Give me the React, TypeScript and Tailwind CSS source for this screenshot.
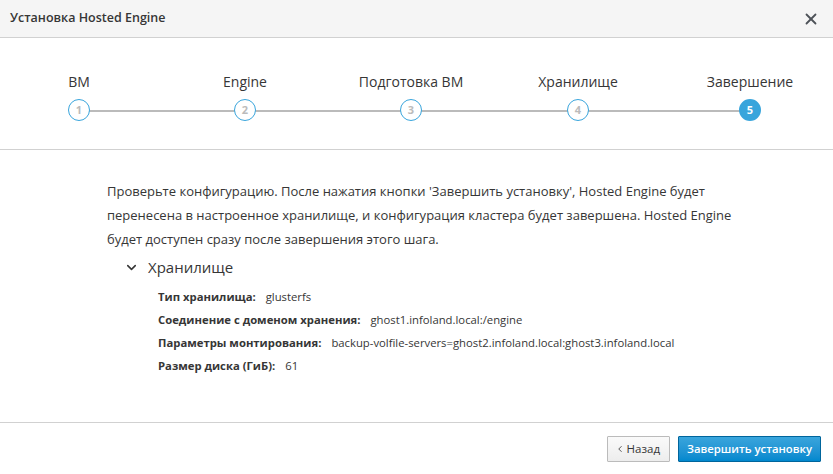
import { X, ChevronDown, ChevronLeft } from "lucide-react";

const steps = [
  { n: 1, label: "ВМ" },
  { n: 2, label: "Engine" },
  { n: 3, label: "Подготовка ВМ" },
  { n: 4, label: "Хранилище" },
  { n: 5, label: "Завершение", active: true },
];

const details = [
  ["Тип хранилища:", "glusterfs"],
  ["Соединение с доменом хранения:", "ghost1.infoland.local:/engine"],
  ["Параметры монтирования:", "backup-volfile-servers=ghost2.infoland.local:ghost3.infoland.local"],
  ["Размер диска (ГиБ):", "61"],
];

function Step({ n, label, active }: { n: number; label: string; active?: boolean }) {
  return (
    <div className="relative z-10 flex w-[22px] flex-col items-center">
      <div className="whitespace-nowrap text-[14px] leading-5 text-[#363636]">{label}</div>
      <div
        className={
          active
            ? "mt-[7px] grid h-[22px] w-[22px] place-items-center rounded-full border-2 border-[#39a5dc] bg-[#39a5dc] text-[11px] font-bold text-white"
            : "mt-[7px] grid h-[22px] w-[22px] place-items-center rounded-full border border-[#39a5dc] bg-white text-[11px] font-bold text-[#bbbbbb]"
        }
      >
        {n}
      </div>
    </div>
  );
}

export default function App() {
  return (
    <div
      className="flex h-[474px] w-[833px] flex-col bg-white text-[#363636]"
      style={{ fontFamily: '"Open Sans", "Noto Sans", sans-serif' }}
    >
      {/* Header */}
      <div className="flex h-[38px] shrink-0 items-center justify-between border-b border-[#d1d1d1] bg-[#f5f5f5] pl-[10px] pr-[13px]">
        <span className="text-[12.5px] font-semibold text-[#363636]">Установка Hosted Engine</span>
        <X className="h-[18px] w-[18px] text-[#4d5258]" strokeWidth={2.4} />
      </div>

      {/* Steps */}
      <div className="shrink-0 border-b border-[#d1d1d1] pb-[28px] pt-[34px]">
        <div className="relative ml-[68px] flex w-[693px] items-start">
          <div className="absolute left-[11px] right-[11px] top-[38px] h-[2px] bg-[#bbbbbb]" />
          <Step {...steps[0]} />
          <div className="w-[144px]" />
          <Step {...steps[1]} />
          <div className="w-[144px]" />
          <Step {...steps[2]} />
          <div className="w-[145px]" />
          <Step {...steps[3]} />
          <div className="w-[150px]" />
          <Step {...steps[4]} />
        </div>
      </div>

      {/* Body */}
      <div className="flex-1 pl-[107px] pt-[29px]">
        <p className="w-[625px] text-[13px] leading-6 text-[#363636]">
          Проверьте конфигурацию. После нажатия кнопки 'Завершить установку', Hosted Engine будет перенесена в
          настроенное хранилище, и конфигурация кластера будет завершена. Hosted Engine будет доступен сразу после
          завершения этого шага.
        </p>
        <div className="mt-[4px] flex items-center gap-[9px] pl-[17px]">
          <ChevronDown className="h-[15px] w-[15px] text-[#363636]" strokeWidth={2.5} />
          <span className="text-[15px] leading-6">Хранилище</span>
        </div>
        <div className="mt-[9px] flex flex-col gap-[5px] pl-[51px]">
          {details.map(([k, v]) => (
            <div key={k} className="flex items-baseline gap-[10px] text-[11.3px] leading-[18px]">
              <span className="font-bold text-[#363636]">{k}</span>
              <span className="text-[#363636]">{v}</span>
            </div>
          ))}
        </div>
      </div>

      {/* Footer */}
      <div className="flex h-[52px] shrink-0 items-start justify-end gap-[8px] border-t border-[#d1d1d1] pr-[12px] pt-[13px]">
        <button className="flex h-[26px] items-center gap-[2px] rounded-[1px] border border-[#bbbbbb] bg-gradient-to-b from-[#fafafa] to-[#ededed] pl-[7px] pr-[9px] text-[11.5px] text-[#363636]">
          <ChevronLeft className="h-[10px] w-[10px]" strokeWidth={2} />
          Назад
        </button>
        <button className="h-[26px] rounded-[1px] border border-[#00659c] bg-gradient-to-b from-[#39a5dc] to-[#0088ce] px-[8px] text-[11.3px] font-semibold text-white">
          Завершить установку
        </button>
      </div>
    </div>
  );
}
